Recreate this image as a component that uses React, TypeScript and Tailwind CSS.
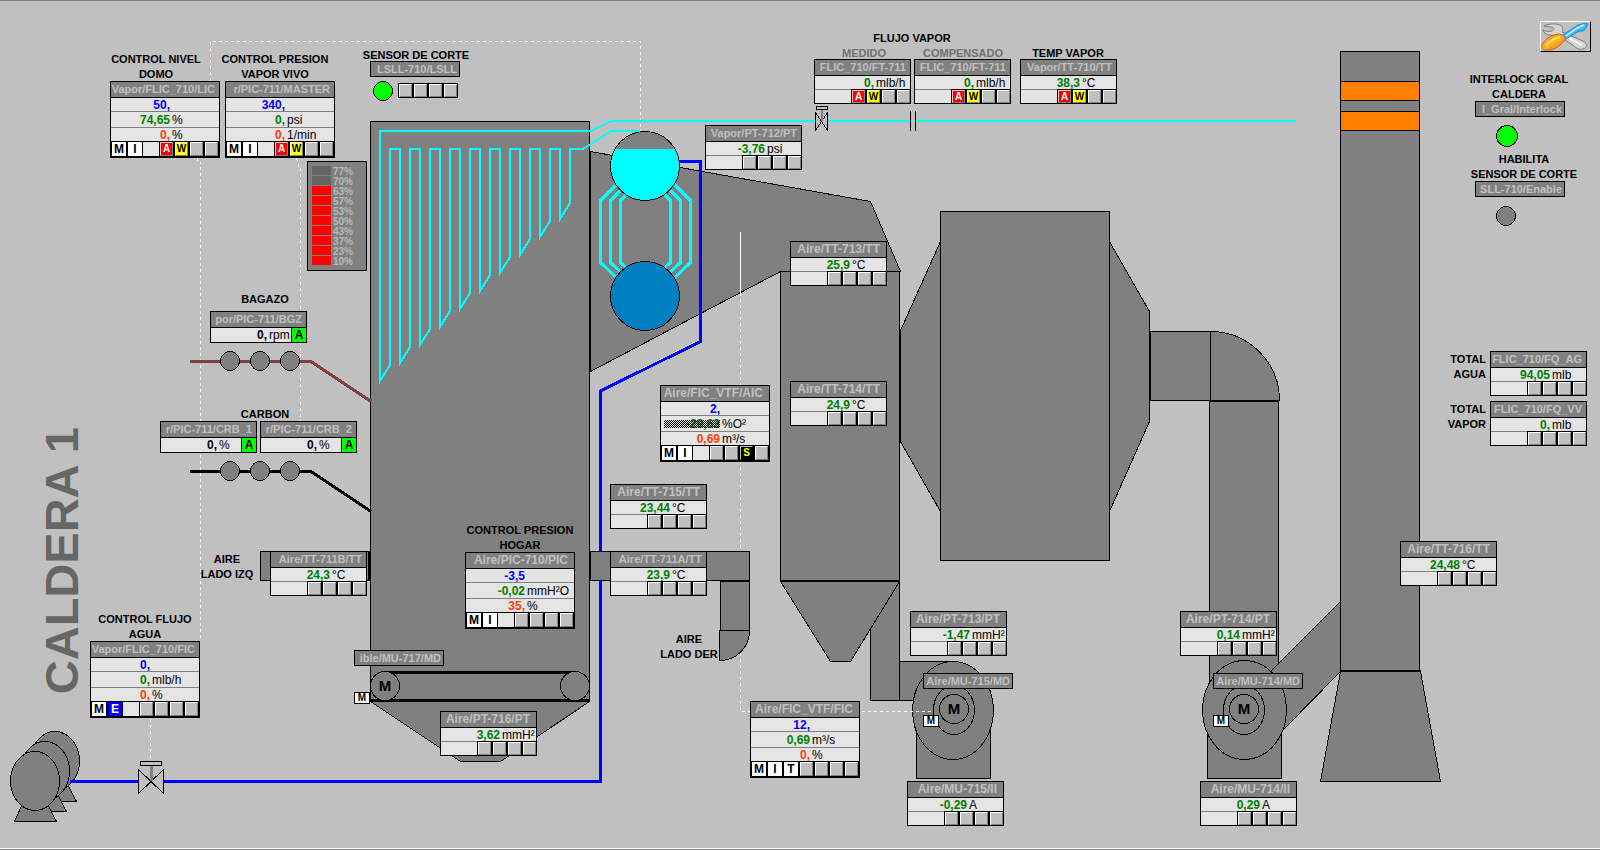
import type { ReactNode } from 'react';

type Kind = 'idle' | 'alarm' | 'warn' | 'sim';

const kindClass: Record<Kind, string> = {
  idle: 'bg-[#c0c0c0] border-t-white border-l-white border-r-[#808080] border-b-[#808080]',
  alarm: 'bg-[#ff0000] text-white border-t-[#ffc0c0] border-l-[#ffc0c0] border-r-[#808080] border-b-[#808080]',
  warn: 'bg-[#ffff00] text-black border-t-[#ffffc0] border-l-[#ffffc0] border-r-[#808080] border-b-[#808080]',
  sim: 'bg-black text-[#ffff00] border-t-[#c0c0c0] border-l-[#c0c0c0] border-r-black border-b-black',
};
const kindLetter: Record<Kind, string> = { idle: '', alarm: 'A', warn: 'W', sim: 'S' };

const NONE: Kind[] = ['idle', 'idle', 'idle', 'idle'];
const AW: Kind[] = ['alarm', 'warn', 'idle', 'idle'];

function Lamps({ kinds }: { kinds: Kind[] }) {
  return (
    <div className="flex gap-[2px] bg-black">
      {kinds.map((k, i) => (
        <span
          key={i}
          className={`flex w-[13px] items-center justify-center border text-[10px] leading-none font-bold ${kindClass[k]}`}
        >
          {kindLetter[k]}
        </span>
      ))}
    </div>
  );
}

function Header({ name, long }: { name: string; long?: boolean }) {
  return (
    <div
      className={`flex h-[16px] justify-end overflow-hidden border-b border-black bg-[#808080] leading-[15px] font-bold whitespace-nowrap text-[#c0c0c0] ${long ? 'pr-[4px] text-[11px]' : 'pr-[6px] text-[12px]'}`}
    >
      {name}
    </div>
  );
}

function Reading({ value, unit, color }: { value: string; unit?: string; color: string }) {
  return (
    <div className="flex h-full items-center gap-[2px] pt-[2px] text-[12px] leading-[13px] whitespace-nowrap">
      <span className={`w-[59px] shrink-0 text-right font-bold ${color}`}>{value}</span>
      <span className="text-black">{unit}</span>
    </div>
  );
}

type SensorProps = { at: string; name: string; value: string; unit: string; kinds?: Kind[]; long?: boolean };

function Sensor({ at, name, value, unit, kinds = NONE, long }: SensorProps) {
  return (
    <section className={`absolute ${at} w-[97px] border border-black bg-[#e4e4e4]`}>
      <Header name={name} long={long} />
      <div className="h-[13px]">
        <Reading value={value} unit={unit} color="text-[#008000]" />
      </div>
      <div className="flex h-[14px]">
        <div className="flex-1 border-t border-[#808080]" />
        <div className="flex border-t border-l border-black">
          <Lamps kinds={kinds} />
        </div>
      </div>
    </section>
  );
}

type ControllerProps = {
  at: string;
  name: string;
  long?: boolean;
  setpoint: string;
  pv: string;
  pvUnit: string;
  out: string;
  outUnit: string;
  modes: string[];
  kinds?: Kind[];
  stale?: boolean;
};

function Controller({ at, name, long, setpoint, pv, pvUnit, out, outUnit, modes, kinds = NONE, stale }: ControllerProps) {
  return (
    <section className={`absolute ${at} w-[110px] border border-b-2 border-black bg-[#e4e4e4]`}>
      <Header name={name} long={long} />
      <div className="h-[14px] border-b border-[#808080]">
        <Reading value={setpoint} color="text-[#0000ff]" />
      </div>
      <div className="relative h-[16px] border-b border-[#808080]">
        <Reading value={pv} unit={pvUnit} color="text-[#008000]" />
        {stale && (
          <div className="absolute top-[4px] left-[3px] h-[8px] w-[56px] bg-[repeating-conic-gradient(#000_0_25%,transparent_0_50%)] bg-size-[2px_2px]" />
        )}
      </div>
      <div className="h-[13px]">
        <Reading value={out} unit={outUnit} color="text-[#ff4000]" />
      </div>
      <div className="flex h-[15px] border-t border-black">
        {modes.map((m) => (
          <button
            key={m}
            type="button"
            className={`w-[16px] border-r border-l border-black text-center text-[12px] leading-[14px] font-bold ${m === 'E' ? 'bg-[#0000ff] text-white' : 'bg-white text-black'}`}
          >
            {m}
          </button>
        ))}
        <div className="flex-1" />
        <div className="flex border-r border-l border-black">
          <Lamps kinds={kinds} />
        </div>
      </div>
    </section>
  );
}

function Feeder({ at, name, unit }: { at: string; name: string; unit: string }) {
  return (
    <section className={`absolute ${at} w-[97px] border border-black bg-[#e4e4e4]`}>
      <Header name={name} long />
      <div className="flex h-[14px] text-[12px] leading-[15px] text-black">
        <span className="w-[56px] text-right font-bold">0,</span>
        <span className="flex-1 pl-[2px]">{unit}</span>
        <button type="button" className="w-[15px] border-l border-black bg-[#00ff00] text-center leading-[14px] font-bold">
          A
        </button>
      </div>
    </section>
  );
}

function Plate({ at, children }: { at: string; children: ReactNode }) {
  return (
    <div
      className={`absolute ${at} flex h-[16px] w-[90px] justify-end overflow-hidden border border-black bg-[#808080] pr-[2px] text-[11px] leading-[14px] font-bold whitespace-nowrap text-[#c0c0c0]`}
    >
      {children}
    </div>
  );
}

function Caption({ at, lines, tone = 'text-black', align = 'text-center' }: { at: string; lines: string[]; tone?: string; align?: string }) {
  return (
    <h2 className={`absolute ${at} w-[130px] pt-px text-[11px] leading-[15px] font-bold whitespace-nowrap ${tone} ${align}`}>
      {lines.map((l) => (
        <span key={l} className="block">
          {l}
        </span>
      ))}
    </h2>
  );
}

function ModeBox({ at }: { at: string }) {
  return (
    <button
      type="button"
      className={`absolute ${at} h-[12px] w-[16px] border border-black bg-white text-center text-[10px] leading-[10px] font-bold text-black`}
    >
      M
    </button>
  );
}

function LevelBars() {
  const levels = ['77%', '70%', '63%', '57%', '53%', '50%', '43%', '37%', '23%', '10%'];
  return (
    <div className="absolute top-[161px] left-[307px] w-[60px] border border-black bg-[#808080] p-[4px]">
      {levels.map((l, i) => (
        <div key={l} className="flex h-[10px] gap-[2px] text-[10px] leading-[12px] font-bold text-[#b8b8b8]">
          <span className={`mb-px w-[19px] ${i < 2 ? 'bg-[#646464]' : 'bg-[#ff0000]'}`} />
          {l}
        </div>
      ))}
    </div>
  );
}

function coilPath() {
  let d = 'M592 131 H380 V381';
  for (let i = 0; i < 10; i++) {
    const x = 380 + i * 20;
    d += ` L${x + 10} ${365 - i * 18} V149`;
    if (i < 9) d += ` H${x + 20} V${363 - i * 18}`;
  }
  return d + ' H583 L611 131 H640';
}

function Pump({ dx, dy }: { dx: number; dy: number }) {
  return (
    <g transform={`translate(${dx} ${dy})`}>
      <path d="M22 805 L14.5 821.5 H56.5 L48 805 Z" />
      <ellipse cx="35" cy="781" rx="24.5" ry="29.5" />
    </g>
  );
}

function Plant() {
  return (
    <svg width="1600" height="850" viewBox="0 0 1600 850" className="absolute top-0 left-0" shapeRendering="crispEdges" aria-hidden="true">
      <g fill="none" stroke="#0000ff" strokeWidth="3">
        <path d="M600.5 400 V781.5 H70" />
      </g>

      <g fill="#808080" stroke="#000" strokeWidth="1">
        <path d="M590.5 151.5 L870.5 201.5 L900.5 271.5 H780.5 L590.5 371.5 Z" />
        <rect x="870.5" y="581.5" width="29" height="119" />
        <rect x="780.5" y="271.5" width="119" height="309" />
        <path d="M780.5 581.5 L830.5 661.5 H850.5 L899.5 581.5 Z" />
        <path d="M780 581 H900" strokeWidth="2" />
        <path d="M940.5 241.5 L900.5 330.5 V441.5 L940.5 511.5 Z" />
        <path d="M900 331 V441" strokeWidth="2" />
        <path d="M1109.5 241.5 L1149.5 311.5 V421.5 L1109.5 511.5 Z" />
        <rect x="940.5" y="211.5" width="169" height="349" />
        <rect x="1150.5" y="331.5" width="60" height="69" />
        <path d="M1210.5 331.5 A69 69 0 0 1 1279.5 400.5 H1210.5 Z" />
        <path d="M1150 331 V401" strokeWidth="2" />
        <rect x="1209.5" y="401.5" width="69" height="290" />
        <path d="M1340.5 601.5 L1244.5 697.5 L1284.5 728.5 L1340.5 671.5 Z" />
        <rect x="1340.5" y="51.5" width="79" height="619" />
        <rect x="1340.5" y="81.5" width="79" height="19" fill="#ff8000" />
        <rect x="1340.5" y="111.5" width="79" height="19" fill="#ff8000" />
        <path d="M1340.5 671.5 L1320.5 781.5 H1440.5 L1420.5 671.5 Z" />
        <path d="M1340 671 H1421" strokeWidth="2" />
        <rect x="899.5" y="661.5" width="54" height="39" />
        <rect x="916.5" y="710.5" width="74" height="68" />
        <ellipse cx="953" cy="710.5" rx="40.5" ry="49" />
        <ellipse cx="954" cy="710" rx="20.5" ry="24.5" />
        <circle cx="954" cy="709" r="14.5" />
        <rect x="1207.5" y="710.5" width="74" height="68" />
        <ellipse cx="1244.5" cy="710" rx="42" ry="49.5" />
        <ellipse cx="1244" cy="710" rx="20.5" ry="24.5" />
        <circle cx="1244" cy="709" r="14.5" />
        <path d="M370.5 701.5 L460.5 761.5 H500.5 L589.5 701.5 Z" />
        <rect x="260.5" y="551.5" width="108" height="29" />
        <rect x="370.5" y="121.5" width="219" height="579" />
        <path d="M369.5 551 V581" />
        <path d="M590 151 V371" strokeWidth="2" />
      </g>

      <g fill="none" stroke="#fff" strokeWidth="1">
        <path d="M740.5 232 V293" />
        <g strokeDasharray="3 3">
          <path d="M197.5 158 V162 H200.5 V638" />
          <path d="M210.5 81 V41.5 H640.5 V131" />
          <path d="M296.5 158 L298.5 166 H300.5 V421" />
          <path d="M150.5 719 V761" />
          <path d="M740.5 293 V711.5 H932" />
        </g>
      </g>

      <g fill="#808080" stroke="#000">
        <rect x="590.5" y="551.5" width="159" height="29" />
        <path d="M590 551 V581 M720 581 H750" strokeWidth="2" />
        <rect x="720.5" y="581.5" width="29" height="49" />
        <path d="M719.5 630.5 H749.5 C749.5 648 736 660.5 719.5 660.5 Z" />
      </g>

      <g fill="none" stroke="#00ffff">
        <g strokeWidth="3">
          <path d="M630.5 170.5 L600.5 200.5 V262.5 L630.5 291.5" />
          <path d="M635.5 175.5 L610.5 200.5 V262.5 L635.5 286.5" />
          <path d="M640.5 180.5 L620.5 200.5 V262.5 L640.5 281.5" />
          <path d="M660.5 170.5 L690.5 200.5 V262.5 L660.5 291.5" />
          <path d="M655.5 175.5 L680.5 200.5 V262.5 L655.5 286.5" />
          <path d="M650.5 180.5 L670.5 200.5 V262.5 L650.5 281.5" />
        </g>
        <g strokeWidth="2">
          <path d={coilPath()} />
          <path d="M591 131 L611 121 H910 M915 121 H1296" />
        </g>
      </g>

      <path d="M679 161.5 H700.5 V341.5 L600.5 391 V402" fill="none" stroke="#0000ff" strokeWidth="3" />
      <circle cx="645" cy="166" r="34.5" fill="#808080" />
      <path d="M615 149 H675 A34.5 34.5 0 1 1 615 149 Z" fill="#00ffff" />
      <circle cx="645" cy="166" r="34.5" fill="none" stroke="#000" />
      <circle cx="645" cy="296" r="34.5" fill="#0080c0" stroke="#000" />

      <g fill="none" strokeWidth="3">
        <path d="M190 361.5 H311 L371 401.5" stroke="#804040" />
        <path d="M190 471.5 H311 L371 511.5" stroke="#000" />
      </g>
      <g fill="#808080" stroke="#000">
        {[361, 471].map((y) => [230, 260, 290].map((x) => <circle key={`${x}-${y}`} cx={x} cy={y} r="9.5" />))}
        <path d="M385 672.5 H575" strokeWidth="3" />
        <path d="M370 700.5 H590" strokeWidth="3" />
        <circle cx="385" cy="686" r="14.5" />
        <circle cx="575" cy="686" r="14.5" />
        <Pump dx={20} dy={-20} />
        <Pump dx={10} dy={-10} />
        <Pump dx={0} dy={0} />
      </g>
      <path d="M70 781.5 H140" stroke="#0000ff" strokeWidth="3" />

      <g fill="#c0c0c0" stroke="#000">
        <rect x="815" y="119" width="13" height="4" stroke="none" />
        <path d="M815.5 112.5 L827.5 130.5 V112.5 L815.5 130.5 Z" />
        <path d="M822 110 V121" stroke="#808080" strokeWidth="2" />
        <rect x="816.5" y="106.5" width="11" height="3" />
        <rect x="139" y="779" width="25" height="5" stroke="none" />
        <path d="M138.5 769.5 L163.5 793.5 V769.5 L138.5 793.5 Z" />
        <path d="M151.5 766 V781" stroke="#808080" strokeWidth="3" />
        <rect x="140.5" y="761.5" width="21" height="4" />
        <path d="M910.5 111 V131 M915.5 111 V131" />
      </g>

      <g stroke="#000">
        <circle cx="383" cy="91" r="9.5" fill="#00ff00" />
        <circle cx="1507" cy="136" r="10.5" fill="#00ff00" />
        <circle cx="1506" cy="216" r="9.5" fill="#808080" />
      </g>

      <g fontFamily="'Liberation Sans', sans-serif" fontWeight="700" fontSize="15" textAnchor="middle">
        <text x="385" y="691">M</text>
        <text x="954" y="714">M</text>
        <text x="1244" y="714">M</text>
      </g>
    </svg>
  );
}

function ToolsIcon() {
  return (
    <svg viewBox="0 0 48 28" className="h-[28px] w-[48px]" aria-hidden="true">
      <defs>
        <linearGradient id="handle" x1="0" y1="0" x2="1" y2="1">
          <stop offset="0" stopColor="#ff8a1c" />
          <stop offset="0.5" stopColor="#ffb52a" />
          <stop offset="1" stopColor="#f26a10" />
        </linearGradient>
      </defs>
      <path
        d="M3 3 C6 1 14 0 19 2 C23 4 22 8 21 9 L42 18 C47 20 47 25 42 26 C38 27 35 25 33 23 L17 12 C11 13 3 12 2 7 C6 9 12 9 13 6 C13 4 8 4 3 3 Z"
        fill="#d4d4d4"
        stroke="#7c7c7c"
      />
      <path d="M26 14 L41 22" stroke="#f4f4f4" strokeWidth="2" />
      <path d="M20 13 L34 4 C37 1 42 1 46 0 C47 3 45 6 42 8 L38 8 L25 16 Z" fill="#38b8f8" stroke="#1c86d0" />
      <path d="M25 13 L36 5 L43 2" stroke="#b4ecff" strokeWidth="2" fill="none" />
      <path d="M1 22 C4 15 12 12 17 11 C21 11 25 14 24 17 C20 22 14 27 7 27 C2 27 0 25 1 22 Z" fill="url(#handle)" stroke="#d85c08" />
      <path d="M5 22 C9 18 14 15 19 14" stroke="#ffe060" strokeWidth="2" fill="none" />
    </svg>
  );
}

export default function App() {
  return (
    <main className="relative min-h-screen overflow-hidden border-t border-b border-[#808080] bg-[#c0c0c0] font-['Liberation_Sans',Arial,sans-serif] shadow-[inset_0_-1px_0_#ffffff]">
      <div className="absolute -top-px left-0">
        <Plant />

        <h1 className="absolute top-[427px] left-[35px] rotate-180 text-[47px] leading-[54px] font-bold whitespace-nowrap text-[#666666] [writing-mode:vertical-rl]">
          CALDERA 1
        </h1>

        <Caption at="top-[51px] left-[91px]" lines={['CONTROL NIVEL', 'DOMO']} />
        <Caption at="top-[51px] left-[210px]" lines={['CONTROL PRESION', 'VAPOR VIVO']} />
        <Caption at="top-[47px] left-[351px]" lines={['SENSOR DE CORTE']} />
        <Caption at="top-[30px] left-[847px]" lines={['FLUJO VAPOR']} />
        <Caption at="top-[45px] left-[799px]" lines={['MEDIDO']} tone="text-[#707070]" />
        <Caption at="top-[45px] left-[898px]" lines={['COMPENSADO']} tone="text-[#707070]" />
        <Caption at="top-[45px] left-[1003px]" lines={['TEMP VAPOR']} />
        <Caption at="top-[71px] left-[1454px]" lines={['INTERLOCK GRAL', 'CALDERA']} />
        <Caption at="top-[151px] left-[1459px]" lines={['HABILITA', 'SENSOR DE CORTE']} />
        <Caption at="top-[291px] left-[200px]" lines={['BAGAZO']} />
        <Caption at="top-[406px] left-[200px]" lines={['CARBON']} />
        <Caption at="top-[551px] left-[162px]" lines={['AIRE', 'LADO IZQ']} />
        <Caption at="top-[611px] left-[80px]" lines={['CONTROL FLUJO', 'AGUA']} />
        <Caption at="top-[522px] left-[455px]" lines={['CONTROL PRESION', 'HOGAR']} />
        <Caption at="top-[631px] left-[624px]" lines={['AIRE', 'LADO DER']} />
        <Caption at="top-[351px] left-[1356px]" lines={['TOTAL', 'AGUA']} align="text-right" />
        <Caption at="top-[401px] left-[1356px]" lines={['TOTAL', 'VAPOR']} align="text-right" />

        <Controller at="top-[81px] left-[110px]" name="Vapor/FLIC_710/LIC" long setpoint="50," pv="74,65" pvUnit="%" out="0," outUnit="%" modes={['M', 'I']} kinds={AW} />
        <Controller at="top-[81px] left-[225px]" name="r/PIC-711/MASTER" long setpoint="340," pv="0," pvUnit="psi" out="0," outUnit="1/min" modes={['M', 'I']} kinds={AW} />
        <Controller at="top-[385px] left-[660px]" name="Aire/FIC_VTF/AIC" setpoint="2," pv="-29,63" pvUnit="%O²" out="0,69" outUnit="m³/s" modes={['M', 'I']} kinds={['idle', 'idle', 'sim', 'idle']} stale />
        <Controller at="top-[552px] left-[465px]" name="Aire/PIC-710/PIC" setpoint="-3,5" pv="-0,02" pvUnit="mmH²O" out="35," outUnit="%" modes={['M', 'I']} />
        <Controller at="top-[641px] left-[90px]" name="Vapor/FLIC_710/FIC" long setpoint="0," pv="0," pvUnit="mlb/h" out="0," outUnit="%" modes={['M', 'E']} />
        <Controller at="top-[701px] left-[750px]" name="Aire/FIC_VTF/FIC" setpoint="12," pv="0,69" pvUnit="m³/s" out="0," outUnit="%" modes={['M', 'I', 'T']} />

        <Sensor at="top-[59px] left-[814px]" name="FLIC_710/FT-711" long value="0," unit="mlb/h" kinds={AW} />
        <Sensor at="top-[59px] left-[914px]" name="FLIC_710/FT-711" long value="0," unit="mlb/h" kinds={AW} />
        <Sensor at="top-[59px] left-[1020px]" name="Vapor/TT-710/TT" long value="38,3" unit="°C" kinds={AW} />
        <Sensor at="top-[125px] left-[705px]" name="Vapor/PT-712/PT" long value="-3,76" unit="psi" />
        <Sensor at="top-[241px] left-[790px]" name="Aire/TT-713/TT" value="25,9" unit="°C" />
        <Sensor at="top-[381px] left-[790px]" name="Aire/TT-714/TT" value="24,9" unit="°C" />
        <Sensor at="top-[484px] left-[610px]" name="Aire/TT-715/TT" value="23,44" unit="°C" />
        <Sensor at="top-[551px] left-[610px]" name="Aire/TT-711A/TT" long value="23,9" unit="°C" />
        <Sensor at="top-[551px] left-[270px]" name="Aire/TT-711B/TT" long value="24,3" unit="°C" />
        <Sensor at="top-[711px] left-[440px]" name="Aire/PT-716/PT" value="3,62" unit="mmH²" />
        <Sensor at="top-[611px] left-[910px]" name="Aire/PT-713/PT" value="-1,47" unit="mmH²" />
        <Sensor at="top-[781px] left-[907px]" name="Aire/MU-715/II" value="-0,29" unit="A" />
        <Sensor at="top-[611px] left-[1180px]" name="Aire/PT-714/PT" value="0,14" unit="mmH²" />
        <Sensor at="top-[781px] left-[1200px]" name="Aire/MU-714/II" value="0,29" unit="A" />
        <Sensor at="top-[541px] left-[1400px]" name="Aire/TT-716/TT" value="24,48" unit="°C" />
        <Sensor at="top-[351px] left-[1490px]" name="FLIC_710/FQ_AG" long value="94,05" unit="mlb" />
        <Sensor at="top-[401px] left-[1490px]" name="FLIC_710/FQ_VV" long value="0," unit="mlb" />

        <Feeder at="top-[311px] left-[210px]" name="por/PIC-711/BGZ" unit="rpm" />
        <Feeder at="top-[421px] left-[160px]" name="r/PIC-711/CRB_1" unit="%" />
        <Feeder at="top-[421px] left-[260px]" name="r/PIC-711/CRB_2" unit="%" />

        <Plate at="top-[61px] left-[370px]">LSLL-710/LSLL</Plate>
        <Plate at="top-[101px] left-[1475px]">I_Gral/Interlock</Plate>
        <Plate at="top-[181px] left-[1475px]">SLL-710/Enable</Plate>
        <Plate at="top-[650px] left-[354px]">ible/MU-717/MD</Plate>
        <Plate at="top-[673px] left-[923px]">Aire/MU-715/MD</Plate>
        <Plate at="top-[673px] left-[1213px]">Aire/MU-714/MD</Plate>

        <div className="absolute top-[83px] left-[398px] flex h-[15px] border border-black">
          <Lamps kinds={NONE} />
        </div>

        <LevelBars />

        <ModeBox at="top-[692px] left-[354px]" />
        <ModeBox at="top-[715px] left-[923px]" />
        <ModeBox at="top-[715px] left-[1213px]" />

        <button
          type="button"
          aria-label="Herramientas"
          className="absolute top-[21px] left-[1540px] h-[31px] w-[51px] border border-t-white border-r-black border-b-black border-l-white bg-[#c0c0c0]"
        >
          <ToolsIcon />
        </button>
      </div>
    </main>
  );
}
